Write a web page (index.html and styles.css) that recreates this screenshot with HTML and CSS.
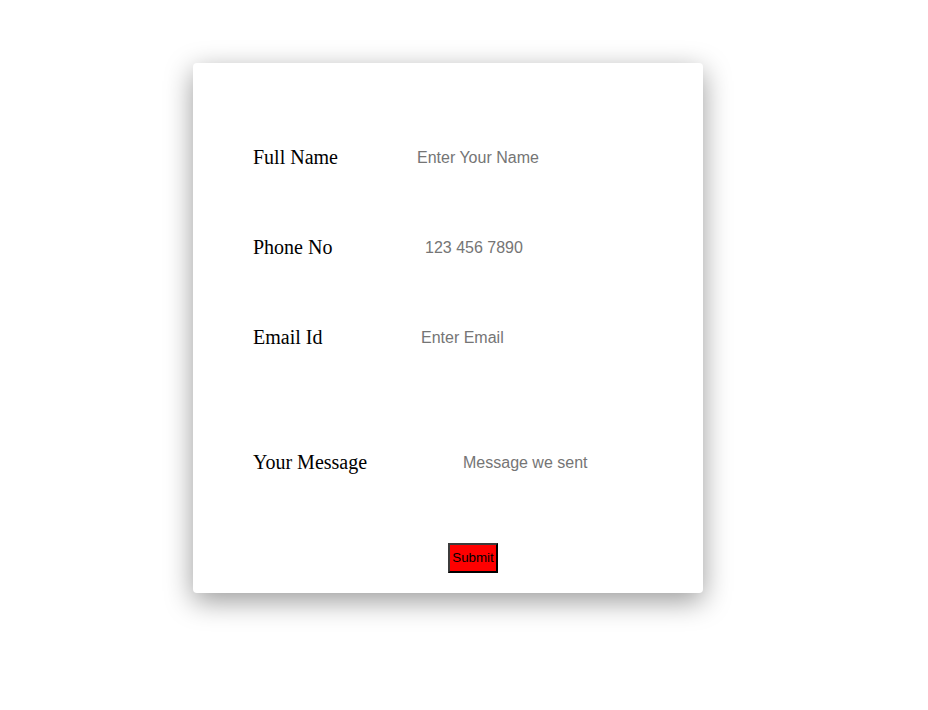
FILE: index.html
```html
<!DOCTYPE html>
<html>
<head>
<meta charset="utf-8">
<link rel="stylesheet" href="styles.css">
</head>
<body>
<form class="card">
  <div class="row">
    <label class="label">Full Name</label>
    <input class="field field-name" type="text" placeholder="Enter Your Name">
  </div>
  <div class="row">
    <label class="label">Phone No</label>
    <input class="field field-phone" type="text" placeholder="123 456 7890">
  </div>
  <div class="row">
    <label class="label">Email Id</label>
    <input class="field field-email" type="text" placeholder="Enter Email">
  </div>
  <div class="row row-message">
    <label class="label">Your Message</label>
    <textarea class="field field-message" rows="1" placeholder="Message we sent"></textarea>
  </div>
  <div class="actions">
    <button class="submit" type="button">Submit</button>
  </div>
</form>
</body>
</html>
```

FILE: styles.css
```css
html, body {
  margin: 0;
  padding: 0;
  background: #ffffff;
}

body {
  padding: 63px 0 0 193px;
  height: 710px;
  box-sizing: border-box;
  overflow: hidden;
}

.card {
  width: 510px;
  height: 530px;
  box-sizing: border-box;
  background: #ffffff;
  border-radius: 4px;
  box-shadow: 0 8px 28px rgba(0, 0, 0, 0.4);
  padding: 79px 60px 0 60px;
  display: flex;
  flex-direction: column;
}

.row {
  display: flex;
  align-items: center;
  height: 30px;
  margin-bottom: 60px;
}

.row-message {
  margin-top: 35px;
  margin-bottom: 66px;
}

.label {
  width: 150px;
  flex: none;
  font-family: "Liberation Serif", "Times New Roman", serif;
  font-size: 20px;
  color: #000000;
}

.field {
  border: none;
  outline: none;
  background: transparent;
  font-family: "Liberation Sans", Arial, sans-serif;
  font-size: 16px;
  color: #000;
  padding: 0;
  margin: 2px 0 0 0;
  width: 200px;
  height: 22px;
  line-height: 22px;
}

.field::placeholder {
  color: #757575;
}

.field-name { padding-left: 14px; }
.field-phone { padding-left: 22px; }
.field-email { padding-left: 18px; }
.field-message {
  padding-left: 60px;
  resize: none;
  overflow: hidden;
}

.actions {
  display: flex;
  padding-left: 195px;
}

.submit {
  width: 50px;
  height: 30px;
  padding: 0 0 2px 0;
  background: #ff0000;
  border-width: 2px;
  border-style: solid;
  border-color: #3c3c3c #000000 #000000 #3c3c3c;
  font-family: "Liberation Sans", Arial, sans-serif;
  font-size: 13.33px;
  color: #000000;
}
```
